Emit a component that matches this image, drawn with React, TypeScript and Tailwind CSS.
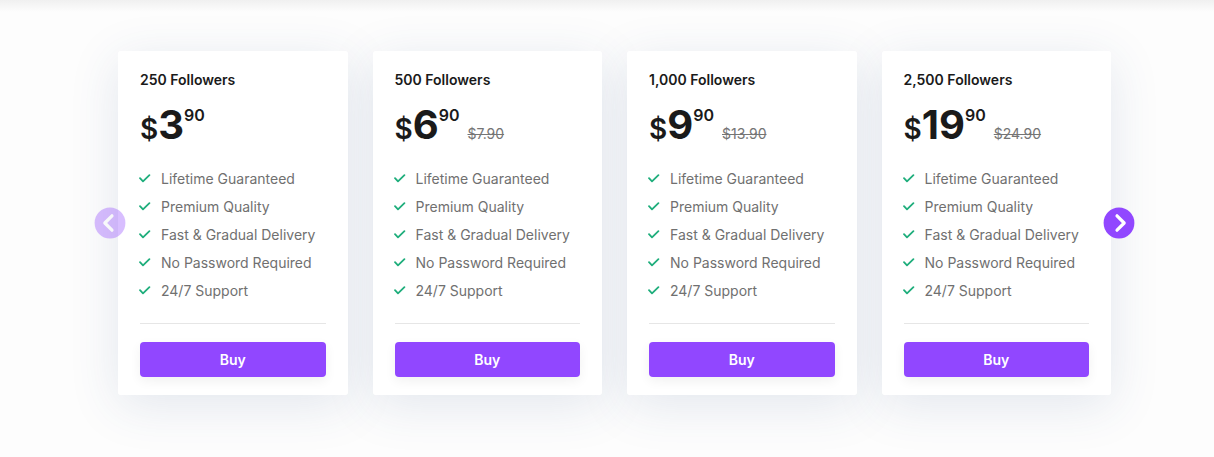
import React from 'react';

interface Plan {
    followers: string;
    dollars: string;
    cents: string;
    oldPrice?: string;
}

const plans: Plan[] = [
    { followers: '250', dollars: '3', cents: '90' },
    { followers: '500', dollars: '6', cents: '90', oldPrice: '$7.90' },
    { followers: '1,000', dollars: '9', cents: '90', oldPrice: '$13.90' },
    { followers: '2,500', dollars: '19', cents: '90', oldPrice: '$24.90' },
];

const features = [
    'Lifetime Guaranteed',
    'Premium Quality',
    'Fast & Gradual Delivery',
    'No Password Required',
    '24/7 Support',
];

const CheckIcon: React.FC = () => (
    <svg viewBox="0 0 12 12" className="w-3 shrink-0" fill="none" stroke="#1fae7c" strokeWidth="1.8" strokeLinecap="round" strokeLinejoin="round" aria-hidden="true">
        <path d="M1 5.2 4 8.4 10.4 2.2" />
    </svg>
);

const ArrowIcon: React.FC<{ path: string }> = ({ path }) => (
    <svg viewBox="0 0 32 32" fill="none" aria-hidden="true">
        <circle cx="16" cy="16" r="15.4" fill="#9147ff" />
        <path d={path} stroke="white" strokeWidth="3.2" strokeLinecap="round" strokeLinejoin="round" />
    </svg>
);

const PlanCard: React.FC<{ plan: Plan }> = ({ plan }) => (
    // The shadow sits on a layer behind all the cards, so it never falls on a neighbour
    <article className="relative rounded-[3px] bg-white px-[22px] pt-5 pb-[18px] before:absolute before:inset-0 before:-z-10 before:rounded-[3px] before:shadow-[0_10px_50px_rgba(50,80,130,0.13)]">
        <h2 className="text-sm leading-[18px] font-semibold text-[#1a1a1a]">{plan.followers} Followers</h2>
        <div className="mt-4 flex h-10 items-baseline text-[#1a1a1a]">
            <span className="text-[28px] leading-10 font-semibold">$</span>
            <span className="text-[40px] leading-10 font-bold">{plan.dollars}</span>
            <span className="self-start text-base leading-5 font-semibold">{plan.cents}</span>
            {plan.oldPrice && (
                <del className="ml-2 text-sm leading-5 text-[#757575]">{plan.oldPrice}</del>
            )}
        </div>
        <ul className="mt-5 text-sm leading-7 text-[#707070]">
            {features.map((feature) => (
                <li key={feature} className="-ml-px flex items-center gap-[10px] whitespace-nowrap">
                    <CheckIcon />
                    {feature}
                </li>
            ))}
        </ul>
        <hr className="mt-[18px] border-[#e6e6e6]" />
        <button
            type="button"
            className="mt-[18px] h-[35px] w-full rounded bg-[#9147ff] text-sm font-semibold text-white shadow-[0_4px_12px_rgba(0,0,0,0.06)]"
        >
            Buy
        </button>
    </article>
);

const App: React.FC = () => {
    return (
        <main className="min-h-screen bg-[#fdfdfd] font-['Inter',sans-serif]">
            <div className="h-3 bg-linear-to-b from-[#f0f0f0] to-[#fdfdfd]" />
            <section className="pt-[39px] pr-[103px] pb-[62px] pl-[118px]">
                <div className="relative isolate grid grid-cols-4 gap-[25px]">
                    {plans.map((plan) => (
                        <PlanCard key={plan.followers} plan={plan} />
                    ))}
                    <button
                        type="button"
                        aria-label="Previous plans"
                        disabled
                        className="absolute top-1/2 -left-6 size-8 -translate-y-1/2 opacity-35"
                    >
                        <ArrowIcon path="M18 8.8 10.8 16 18 23.2" />
                    </button>
                    <button
                        type="button"
                        aria-label="Next plans"
                        className="absolute top-1/2 -right-6 size-8 -translate-y-1/2"
                    >
                        <ArrowIcon path="M14 8.8 21.2 16 14 23.2" />
                    </button>
                </div>
            </section>
        </main>
    );
};

export default App;
